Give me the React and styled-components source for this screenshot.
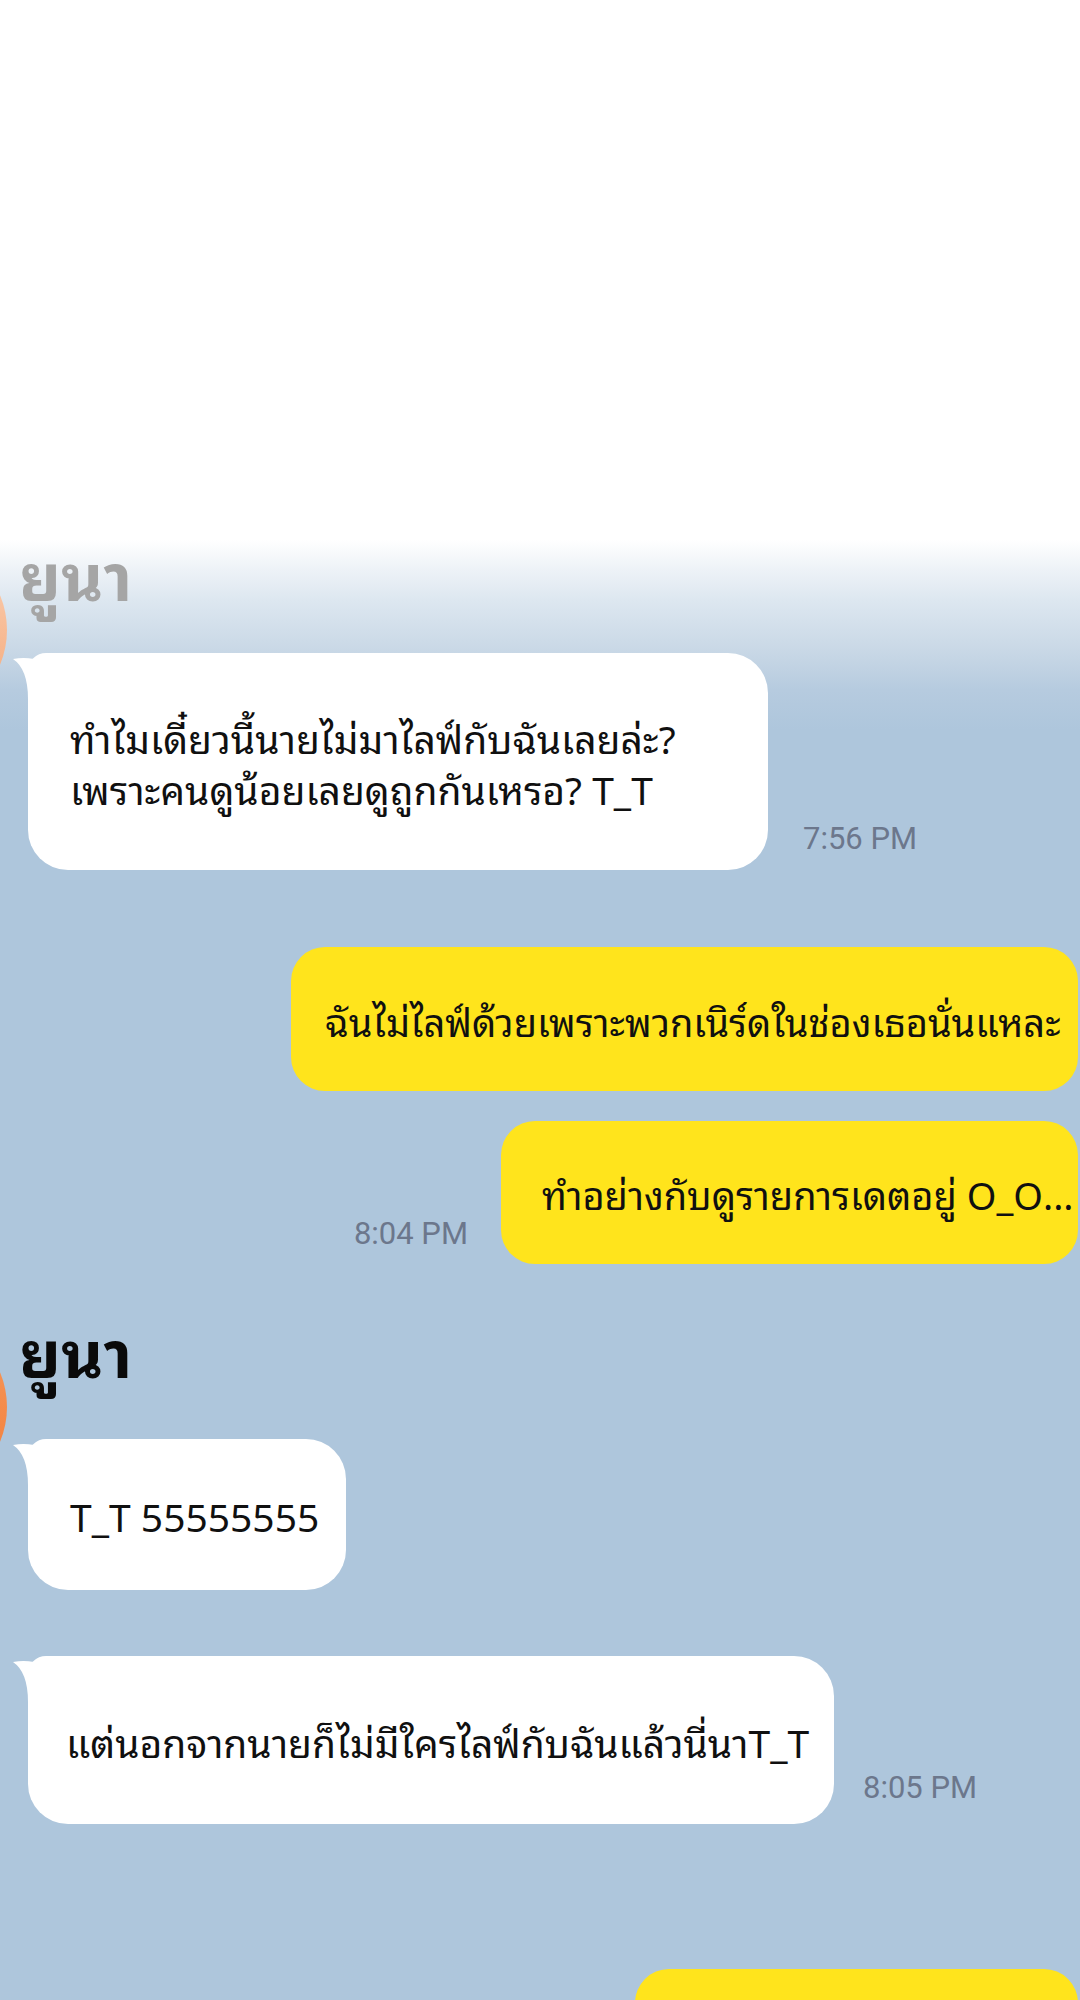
import React from 'react'
import styled, { createGlobalStyle } from 'styled-components'

const Global = createGlobalStyle`
  body {
    margin: 0;
    background: #aec6dc;
  }
`

const thai = `'Noto Sans Thai Looped', 'Noto Sans Thai', 'Roboto', sans-serif`

const Page = styled.div`
  position: relative;
  width: 1080px;
  height: 2000px;
  overflow: hidden;
  background: linear-gradient(
    to bottom,
    #ffffff 0,
    #ffffff 540px,
    #edf2f7 570px,
    #dde7f0 600px,
    #c9d8e6 650px,
    #b6cbdf 690px,
    #aec6dc 730px
  );
`

const Thread = styled.div`
  display: flex;
  flex-direction: column;
  padding-top: 540px;
`

const Group = styled.div`
  display: flex;
  align-items: flex-start;
  margin-top: ${p => p.$mt || 0}px;
`

const Avatar = styled.div`
  flex: none;
  width: 180px;
  height: 180px;
  margin-left: -173px;
  margin-top: ${p => p.$mt}px;
  border-radius: 50%;
  background: ${p =>
    p.$faded
      ? 'linear-gradient(to bottom, #fbd3b8, #f4a574)'
      : 'linear-gradient(to bottom, #f79a5c, #f27d3a)'};
`

const Column = styled.div`
  display: flex;
  flex-direction: column;
  margin-left: 21px;
`

const Name = styled.div`
  margin-left: -9px;
  font-family: ${thai};
  font-weight: 700;
  font-size: 65px;
  line-height: 64px;
  color: ${p => (p.$faded ? '#a5a5a5' : '#0a0a0a')};
`

const Row = styled.div`
  display: flex;
  align-items: flex-end;
  gap: ${p => p.$gap || 33}px;
  margin-top: ${p => p.$mt || 0}px;
  justify-content: ${p => (p.$out ? 'flex-end' : 'flex-start')};
  margin-right: ${p => (p.$out ? 2 : 0)}px;
`

const Bubble = styled.div`
  position: relative;
  box-sizing: border-box;
  display: flex;
  flex-direction: column;
  justify-content: center;
  width: ${p => p.$w}px;
  min-height: ${p => p.$h}px;
  padding-left: ${p => p.$pl || 42}px;
  border-radius: ${p => (p.$out ? '34px' : '18px 40px 40px 40px')};
  background: ${p => (p.$out ? '#ffe41c' : '#ffffff')};
  font-family: ${thai};
  font-size: ${p => p.$fs || 39}px;
  line-height: 51px;
  color: #101010;
  white-space: nowrap;
`

const Tail = styled.svg`
  position: absolute;
  left: -15px;
  top: 4px;
  width: 40px;
  height: 42px;
`

const Time = styled.div`
  flex: none;
  font-family: 'Roboto', 'Liberation Sans', sans-serif;
  font-size: 31px;
  line-height: 31px;
  color: #6c778c;
  margin-bottom: ${p => p.$mb}px;
`

const BubbleTail = () => (
  <Tail viewBox="0 0 40 42">
    <path d="M0 2 Q16 -1 31 5 L40 5 L40 42 L15 42 Q15 12 0 2 Z" fill="#ffffff" />
  </Tail>
)

const In = ({ w, h, pl, children }) => (
  <Bubble $w={w} $h={h} $pl={pl}>
    <BubbleTail />
    {children}
  </Bubble>
)

const Out = ({ w, h, pl, fs, children }) => (
  <Bubble $out $w={w} $h={h} $pl={pl} $fs={fs}>
    {children}
  </Bubble>
)

export default function App() {
  return (
    <>
      <Global />
      <Page>
        <Thread>
          <Group>
            <Avatar $faded $mt={0} />
            <Column>
              <Name $faded>ยูนา</Name>
              <Row $mt={49} $gap={35}>
                <In w={740} h={217}>
                  <span>ทำไมเดี๋ยวนี้นายไม่มาไลฟ์กับฉันเลยล่ะ?</span>
                  <span>เพราะคนดูน้อยเลยดูถูกกันเหรอ? T_T</span>
                </In>
                <Time $mb={16}>7:56 PM</Time>
              </Row>
            </Column>
          </Group>

          <Row $out $mt={77}>
            <Out w={787} h={144} pl={34} fs={38}>
              ฉันไม่ไลฟ์ด้วยเพราะพวกเนิร์ดในช่องเธอนั่นแหละ
            </Out>
          </Row>
          <Row $out $mt={30}>
            <Time $mb={15}>8:04 PM</Time>
            <Out w={577} h={143} pl={41} fs={38}>
              ทำอย่างกับดูรายการเดตอยู่ O_O...
            </Out>
          </Row>

          <Group $mt={53}>
            <Avatar $mt={0} />
            <Column>
              <Name>ยูนา</Name>
              <Row $mt={58}>
                <In w={318} h={151}>
                  T_T 55555555
                </In>
              </Row>
              <Row $mt={66} $gap={29}>
                <In w={806} h={168} pl={38}>
                  แต่นอกจากนายก็ไม่มีใครไลฟ์กับฉันแล้วนี่นาT_T
                </In>
                <Time $mb={21}>8:05 PM</Time>
              </Row>
            </Column>
          </Group>

          <Row $out $mt={145}>
            <Out w={443} h={144} pl={40} />
          </Row>
        </Thread>
      </Page>
    </>
  )
}
